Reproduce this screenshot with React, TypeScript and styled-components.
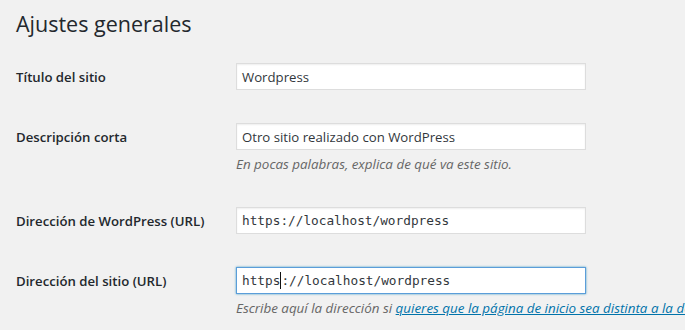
import styled, { createGlobalStyle } from 'styled-components';

const GlobalStyle = createGlobalStyle`
    html, body {
        margin: 0;
        padding: 0;
        background: #f1f1f1;
        overflow: hidden;
    }
    body {
        font-family: "Open Sans", "Noto Sans", sans-serif;
        color: #23282d;
    }
`;

const Wrap = styled.div`
    padding: 0 16px;
    white-space: nowrap;
`;

const Title = styled.h1`
    margin: 0;
    padding: 9px 0 10px;
    font-size: 21.5px;
    line-height: 29px;
    font-weight: 400;
    color: #23282d;
`;

const Row = styled.div`
    display: grid;
    grid-template-columns: 220px 350px;
    align-items: start;
    padding: 15px 0 18px;
`;

const Label = styled.label`
    padding-top: 5px;
    font-size: 13.2px;
    line-height: 18px;
    font-weight: 600;
    color: #23282d;
`;

const Cell = styled.div`
    display: flex;
    flex-direction: column;
`;

const Field = styled.div<{ $mono?: boolean; $focused?: boolean }>`
    box-sizing: border-box;
    height: 27px;
    display: flex;
    align-items: center;
    padding: 0 5px;
    background: #fff;
    border: 1px solid ${(p) => (p.$focused ? '#5b9dd9' : '#ddd')};
    box-shadow: ${(p) =>
        p.$focused ? '0 0 2px rgba(30, 140, 190, 0.8)' : 'inset 0 1px 2px rgba(0, 0, 0, 0.07)'};
    font-family: ${(p) => (p.$mono ? '"DejaVu Sans Mono", monospace' : '"Open Sans", sans-serif')};
    font-size: ${(p) => (p.$mono ? '12.75px' : '13.2px')};
    color: #32373c;
`;

const Caret = styled.span`
    display: inline-block;
    width: 1px;
    height: 17px;
    background: #111;
`;

const Description = styled.p`
    margin: 4px 0 0;
    font-size: 13.4px;
    line-height: 20px;
    font-style: italic;
    color: #666;

    a {
        color: #0073aa;
        text-decoration: underline;
    }
`;

export default function App() {
    return (
        <>
            <GlobalStyle />
            <Wrap>
                <Title>Ajustes generales</Title>
                <Row>
                    <Label>Título del sitio</Label>
                    <Cell>
                        <Field>Wordpress</Field>
                    </Cell>
                </Row>
                <Row>
                    <Label>Descripción corta</Label>
                    <Cell>
                        <Field>Otro sitio realizado con WordPress</Field>
                        <Description>En pocas palabras, explica de qué va este sitio.</Description>
                    </Cell>
                </Row>
                <Row>
                    <Label>Dirección de WordPress (URL)</Label>
                    <Cell>
                        <Field $mono>https://localhost/wordpress</Field>
                    </Cell>
                </Row>
                <Row>
                    <Label>Dirección del sitio (URL)</Label>
                    <Cell>
                        <Field $mono $focused>
                            https<Caret />://localhost/wordpress
                        </Field>
                        <Description>
                            Escribe aquí la dirección si{' '}
                            <a href="#">
                                quieres que la página de inicio sea distinta a la del directorio de
                                instalación de WordPress
                            </a>
                            .
                        </Description>
                    </Cell>
                </Row>
            </Wrap>
        </>
    );
}
